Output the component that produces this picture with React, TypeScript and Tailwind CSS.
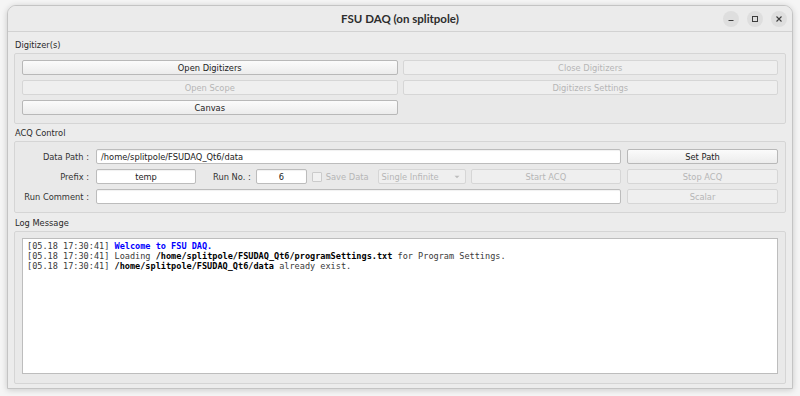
import React from "react";

const ui = "font-['DejaVu_Sans',sans-serif] text-[8.3px] leading-[10px]";

const Btn = ({ label, disabled }: { label: string; disabled?: boolean }) => (
  <button
    className={`${ui} h-[15px] w-full rounded-[2px] border flex items-center justify-center ${
      disabled
        ? "border-[#d6d6d6] bg-[#efefef] text-[#b6b6b6]"
        : "border-[#b8b8b8] bg-linear-to-b from-[#fbfbfb] to-[#ececec] text-[#222222]"
    }`}
  >
    {label}
  </button>
);

const Field = ({ value, center, className }: { value?: string; center?: boolean; className?: string }) => (
  <div
    className={`${ui} h-[15px] bg-white border border-[#bcbcbc] rounded-[2px] flex items-center px-[4px] text-[#222222] shadow-[inset_0_1px_1px_rgba(0,0,0,0.06)] ${
      center ? "justify-center" : ""
    } ${className ?? ""}`}
  >
    {value}
  </div>
);

const Label = ({ text }: { text: string }) => (
  <div className={`${ui} text-right text-[#333333] whitespace-nowrap pr-[1px]`}>{text}</div>
);

const SectionTitle = ({ text, h }: { text: string; h: string }) => (
  <div className={`${ui} ${h} flex items-end pb-[3px] pl-[1px] text-[#2a2a2a]`}>{text}</div>
);

const log = [
  { ts: "[05.18 17:30:41]", parts: [{ t: "Welcome to FSU DAQ.", c: "font-bold text-[#0000ff]" }] },
  {
    ts: "[05.18 17:30:41]",
    parts: [
      { t: "Loading ", c: "" },
      { t: "/home/splitpole/FSUDAQ_Qt6/programSettings.txt", c: "font-bold text-black" },
      { t: " for Program Settings.", c: "" },
    ],
  },
  {
    ts: "[05.18 17:30:41]",
    parts: [
      { t: "/home/splitpole/FSUDAQ_Qt6/data", c: "font-bold text-black" },
      { t: " already exist.", c: "" },
    ],
  },
];

export default function App() {
  return (
    <div className="w-[800px] h-[396px] bg-[#f5f5f5] pt-[5px] pl-[7px] overflow-hidden">
      <div className="w-[786px] h-[384px] flex flex-col rounded-t-[9px] border border-[#c4c4c4] bg-[#ececec] shadow-[0_1px_6px_rgba(0,0,0,0.18)] overflow-hidden">
        {/* Title bar */}
        <div className="h-[26px] shrink-0 grid grid-cols-[1fr_auto_1fr] items-center bg-[#ebebeb] border-b border-[#d2d2d2]">
          <div />
          <div className="font-['Lato',sans-serif] font-bold text-[11.5px] text-[#2d2d2d] pt-[1px]">
            FSU DAQ (on splitpole)
          </div>
          <div className="flex justify-end gap-[8px] pr-[5px] pt-[1px]">
            <div className="w-[16px] h-[16px] rounded-full bg-[#dedede] flex items-center justify-center">
              <svg width="8" height="8" viewBox="0 0 8 8">
                <path d="M1.5 5.5h5" stroke="#3c3c3c" strokeWidth="1" />
              </svg>
            </div>
            <div className="w-[16px] h-[16px] rounded-full bg-[#dedede] flex items-center justify-center">
              <svg width="8" height="8" viewBox="0 0 8 8">
                <rect x="1.5" y="1.5" width="5" height="5" fill="none" stroke="#3c3c3c" strokeWidth="1" />
              </svg>
            </div>
            <div className="w-[16px] h-[16px] rounded-full bg-[#dedede] flex items-center justify-center">
              <svg width="8" height="8" viewBox="0 0 8 8">
                <path d="M1.5 1.5l5 5M6.5 1.5l-5 5" stroke="#3c3c3c" strokeWidth="1.1" />
              </svg>
            </div>
          </div>
        </div>

        {/* Body */}
        <div className="flex-1 flex flex-col px-[6px]">
          <SectionTitle text="Digitizer(s)" h="h-[21px]" />
          <div className="border border-[#d5d5d5] rounded-[2px] bg-[#e9e9e9] pt-[6px] pb-[8px] px-[7px]">
            <div className="grid grid-cols-2 gap-x-[5px] gap-y-[5px]">
              <Btn label="Open Digitizers" />
              <Btn label="Close Digitizers" disabled />
              <Btn label="Open Scope" disabled />
              <Btn label="Digitizers Settings" disabled />
              <Btn label="Canvas" />
            </div>
          </div>

          <SectionTitle text="ACQ Control" h="h-[17px]" />
          <div className="border border-[#d5d5d5] rounded-[2px] bg-[#e9e9e9] pt-[7px] pb-[8px] px-[7px]">
            <div className="grid grid-cols-[68px_1fr_151px] gap-x-[6px] gap-y-[5px] items-center">
              <Label text="Data Path :" />
              <Field value="/home/splitpole/FSUDAQ_Qt6/data" className="px-[2px]" />
              <Btn label="Set Path" />

              <Label text="Prefix :" />
              <div className="flex items-center">
                <Field value="temp" center className="w-[100px] shrink-0" />
                <div className={`${ui} ml-[17px] text-[#333333] whitespace-nowrap`}>Run No. :</div>
                <Field value="6" center className="w-[51px] shrink-0 ml-[5px]" />
                <div className="ml-[5px] w-[10px] h-[10px] shrink-0 border border-[#cbcbcb] rounded-[1px] bg-[#f1f1f1]" />
                <div className={`${ui} ml-[4px] text-[#b6b6b6] whitespace-nowrap`}>Save Data</div>
                <div
                  className={`${ui} ml-[9px] w-[88px] h-[15px] shrink-0 border border-[#d6d6d6] rounded-[2px] bg-[#efefef] text-[#b6b6b6] flex items-center justify-between pl-[3px] pr-[5px]`}
                >
                  <span>Single Infinite</span>
                  <svg width="6" height="4" viewBox="0 0 6 4">
                    <path d="M0.5 0.8h5L3 3.3z" fill="#bdbdbd" />
                  </svg>
                </div>
                <div className="ml-[5px] flex-1">
                  <Btn label="Start ACQ" disabled />
                </div>
              </div>
              <Btn label="Stop ACQ" disabled />

              <Label text="Run Comment :" />
              <Field />
              <Btn label="Scalar" disabled />
            </div>
          </div>

          <SectionTitle text="Log Message" h="h-[18px]" />
          <div className="border border-[#d5d5d5] rounded-[2px] bg-[#e9e9e9] pt-[6px] pb-[9px] px-[7px]">
            <div className="h-[136px] bg-white border border-[#bdbdbd] pt-[2px] pl-[4px] font-['DejaVu_Sans_Mono',monospace] text-[8.55px] leading-[10px] text-[#3a3a3a]">
              {log.map((line, i) => (
                <div key={i} className="whitespace-pre">
                  {line.ts}{" "}
                  {line.parts.map((p, j) => (
                    <span key={j} className={p.c}>
                      {p.t}
                    </span>
                  ))}
                </div>
              ))}
            </div>
          </div>
        </div>
      </div>
    </div>
  );
}
